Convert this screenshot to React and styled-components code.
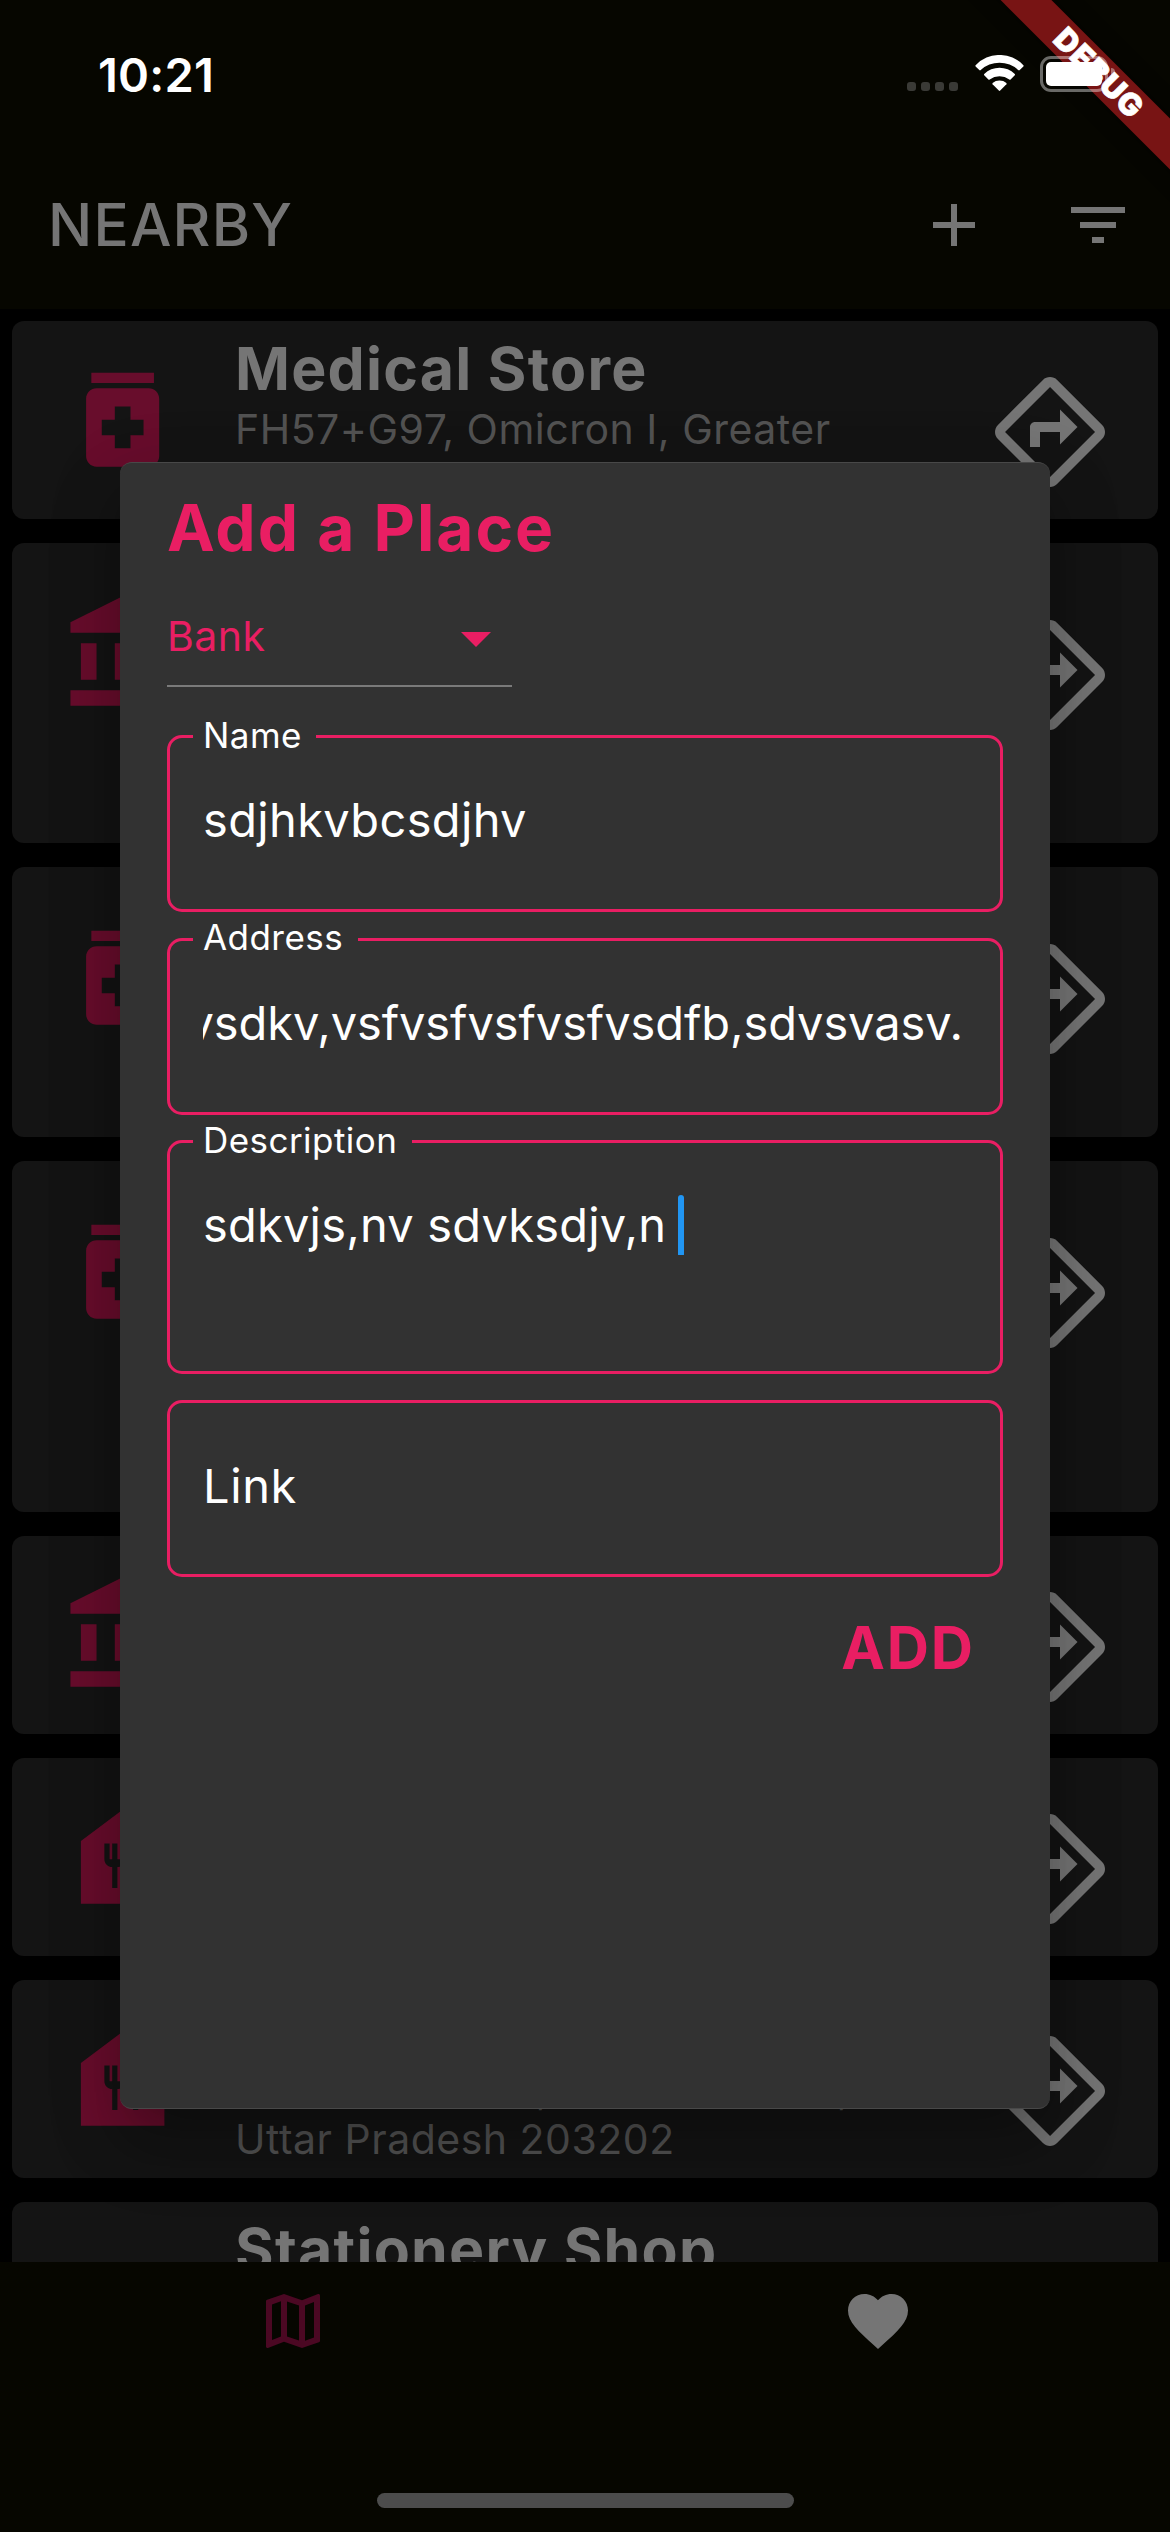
import React from "react";
import styled, { createGlobalStyle } from "styled-components";

const GlobalStyle = createGlobalStyle`
  *, *::before, *::after { box-sizing: border-box; }
  html, body { margin: 0; padding: 0; background: #000; }
`;

const pink = "#e91e63";
const dimPink = "#680d2c";
const dimWhite = "#757575";
const bar = "#060600";

const Screen = styled.main`
  position: relative;
  display: flex;
  flex-direction: column;
  width: 1170px;
  height: 2532px;
  overflow: hidden;
  background: #000;
  color: #fff;
  font-family: Inter, Roboto, "Liberation Sans", sans-serif;
  white-space: nowrap;
`;

const StatusBar = styled.div`
  display: flex;
  flex: none;
  justify-content: space-between;
  height: 141px;
  padding: 46px 55px 0 98px;
  background: ${bar};
`;

const Time = styled.span`
  font-size: 47px;
  font-weight: 600;
  line-height: 57px;
  letter-spacing: 0.2px;
`;

const StatusIcons = styled.div`
  position: relative;
  z-index: 3;
  display: flex;
  align-items: flex-start;
  padding-top: 9px;
`;

const SignalDots = styled.div`
  display: flex;
  gap: 5px;
  margin: 27px 17px 0 0;
`;

const Dot = styled.i`
  width: 9px;
  height: 9px;
  border-radius: 3px;
  background: #3a3a36;
`;

const WifiIcon = styled.svg`
  width: 49px;
  height: 37px;
  margin-right: 16px;
`;

const Battery = styled.div`
  width: 68px;
  height: 36px;
  margin-top: 1px;
  padding: 3px;
  border: 3px solid rgba(255, 255, 255, 0.4);
  border-radius: 11px;
`;

const BatteryFill = styled.div`
  width: 56px;
  height: 24px;
  border-radius: 5px;
  background: #fff;
`;

const BatteryCap = styled.i`
  width: 4px;
  height: 12px;
  margin: 13px 0 0 3px;
  border-radius: 0 4px 4px 0;
  background: rgba(255, 255, 255, 0.4);
`;

const Ribbon = styled.div`
  position: absolute;
  z-index: 2;
  top: 54px;
  left: 948px;
  width: 300px;
  height: 36px;
  padding-left: 3px;
  transform: rotate(45deg);
  background: #781414;
  box-shadow: 0 0 18px rgba(0, 0, 0, 0.5);
  font-size: 31px;
  font-weight: 900;
  line-height: 36px;
  letter-spacing: 0.9px;
  text-align: center;
  -webkit-text-stroke: 0.7px #fff;
`;

const AppBar = styled.header`
  display: flex;
  flex: none;
  align-items: center;
  gap: 72px;
  height: 168px;
  padding: 0 36px 0 48px;
  background: ${bar};
  color: ${dimWhite};
`;

const AppTitle = styled.h1`
  flex: 1;
  margin: 0;
  font-size: 58.5px;
  font-weight: 500;
  line-height: 72px;
  letter-spacing: 1.2px;
`;

const Glyph = styled.svg`
  display: block;
  flex: none;
  width: ${(p) => p.$size}px;
  height: ${(p) => p.$size}px;
  fill: currentColor;
`;

const PlaceList = styled.section`
  display: flex;
  flex: 1;
  flex-direction: column;
  gap: 24px;
  min-height: 0;
  padding: 12px;
  overflow: hidden;
`;

const Card = styled.article`
  display: flex;
  flex: none;
  align-items: flex-start;
  height: ${(p) => p.$height}px;
  border-radius: 12px;
  background: #141414;
`;

const Leading = styled.div`
  width: 223px;
  padding: ${(p) => (p.$tall ? 48.4 : 36.4)}px 0 0 48.4px;
  color: ${dimPink};
`;

const PlaceText = styled.div`
  flex: 1;
  padding-top: 12px;
`;

const PlaceName = styled.h2`
  margin: 0;
  color: ${dimWhite};
  font-size: 59px;
  font-weight: 700;
  line-height: 71px;
  letter-spacing: 1.25px;
`;

const PlaceAddress = styled.p`
  margin: 0;
  color: #525252;
  font-size: 41px;
  line-height: 51px;
  letter-spacing: 0.5px;
  white-space: pre-line;
`;

const Trailing = styled.div`
  padding: ${(p) => (p.$tall ? 72 : 51)}px 48px 0 0;
  color: ${dimWhite};
`;

const BottomNav = styled.nav`
  display: grid;
  flex: none;
  grid-template-columns: 1fr 1fr;
  grid-template-rows: 231px 15px;
  justify-items: center;
  height: 270px;
  background: ${bar};
`;

const NavItem = styled.div`
  padding-top: 23px;
  color: ${(p) => (p.$active ? "#4b0823" : dimWhite)};
`;

const HomeIndicator = styled.div`
  grid-column: 1 / -1;
  width: 417px;
  height: 15px;
  border-radius: 8px;
  background: #4c4c4c;
`;

const Dialog = styled.form`
  position: absolute;
  top: 462px;
  left: 120px;
  display: flex;
  flex-direction: column;
  width: 930px;
  height: 1647px;
  padding: 26px 47px 0;
  border-top: 1px solid #484848;
  border-bottom: 1px solid #484848;
  border-radius: 12px;
  background: #323232;
  box-shadow: 0 33px 45px -21px rgba(0, 0, 0, 0.2),
    0 36px 72px 6px rgba(0, 0, 0, 0.14), 0 20px 70px 10px rgba(0, 0, 0, 0.1);
`;

const DialogTitle = styled.h2`
  margin: 0;
  color: ${pink};
  font-size: 64px;
  font-weight: 700;
  line-height: 78px;
  letter-spacing: 2px;
`;

const Dropdown = styled.div`
  display: flex;
  align-items: center;
  justify-content: space-between;
  width: 345px;
  height: 102px;
  margin-top: 18px;
  padding-top: 2px;
  border-bottom: 2px solid #7a7a7a;
  color: ${pink};
  font-size: 41px;
  line-height: 50px;
  letter-spacing: 0.5px;
  svg { margin-top: 4px; }
`;

const Fields = styled.div`
  display: flex;
  flex-direction: column;
  gap: 25.5px;
  margin-top: 48px;
`;

const Field = styled.div`
  position: relative;
  height: ${(p) => p.$height || 177}px;
  padding: 52px 33px 0;
  border: 3px solid ${pink};
  border-radius: 15px;
`;

const FieldLabel = styled.label`
  position: absolute;
  top: -23.5px;
  left: 23px;
  padding: 0 14.5px 0 10px;
  background: #323232;
  font-size: 35px;
  line-height: 40px;
  letter-spacing: 0.45px;
`;

const FieldValue = styled.div`
  display: flex;
  justify-content: ${(p) => (p.$scrolled ? "flex-end" : "flex-start")};
  padding-right: ${(p) => (p.$scrolled ? 4 : 0)}px;
  overflow: hidden;
  font-size: 47px;
  line-height: 60px;
  letter-spacing: ${(p) => p.$tracking ?? 0.35}px;
  white-space: pre;
`;

const Placeholder = styled.span`
  padding-top: 1px;
`;

const Caret = styled.i`
  width: 6px;
  height: 62px;
  margin: 0 0 -2px -2px;
  border-radius: 3px;
  background: #2196f3;
`;

const AddButton = styled.button`
  align-self: flex-end;
  margin: 36.5px 28px 0 0;
  padding: 0;
  border: 0;
  background: none;
  color: ${pink};
  font: inherit;
  font-size: 58.5px;
  font-weight: 700;
  line-height: 70px;
  letter-spacing: 1.9px;
`;

const paths = {
  add: "M19 13h-6v6h-2v-6H5v-2h6V5h2v6h6v2z",
  filter: "M10 18h4v-2h-4v2zM3 6v2h18V6H3zm3 7h12v-2H6v2z",
  medication:
    "M6 3h12v2H6zM17 6H7c-1.1 0-2 .9-2 2v11c0 1.1.9 2 2 2h10c1.1 0 2-.9 2-2V8c0-1.1-.9-2-2-2zm-1 9h-2.5v2.5h-3V15H8v-3h2.5V9.5h3V12H16v3z",
  bank: "M4 10h3v7H4zM10.5 10h3v7h-3zM2 19h20v3H2zM17 10h3v7h-3zM12 1L2 6v2h20V6z",
  food: "M12 3L4 9v12h16V9l-8-6zm.5 9.5c0 .83-.67 1.5-1.5 1.5v4h-1v-4c-.83 0-1.5-.67-1.5-1.5v-3h1v3h.5v-3h1v3h.5v-3h1v3zM15 18h-1v-3.5h-1v-3c0-1.1.9-2 2-2V18z",
  directions:
    "m22.43 10.59-9.01-9.01c-.75-.75-2.07-.76-2.83 0l-9 9c-.78.78-.78 2.04 0 2.82l9 9c.39.39.9.58 1.41.58.51 0 1.02-.19 1.41-.58l8.99-8.99c.79-.76.8-2.02.03-2.82zm-10.42 10.4-9-9 9-9 9 9-9 9zM8 11v4h2v-3h4v2.5l3.5-3.5L14 7.5V10H9c-.55 0-1 .45-1 1z",
  map: "M20.5 3l-.16.03L15 5.1 9 3 3.36 4.9c-.21.07-.36.25-.36.48V20.5c0 .28.22.5.5.5l.16-.03L9 18.9l6 2.1 5.64-1.9c.21-.07.36-.25.36-.48V3.5c0-.28-.22-.5-.5-.5zM10 5.47l4 1.4v11.66l-4-1.4V5.47zm-5 .99l3-1.01v11.7l-3 1.16V6.46zm14 11.08l-3 1.01V6.86l3-1.16v11.84z",
  heart:
    "M12 21.35l-1.45-1.32C5.4 15.36 2 12.28 2 8.5 2 5.42 4.42 3 7.5 3c1.74 0 3.41.81 4.5 2.09C13.09 3.81 14.76 3 16.5 3 19.58 3 22 5.42 22 8.5c0 3.78-3.4 6.86-8.55 11.54L12 21.35z",
  dropDown: "M7 10l5 5 5-5z",
};

const Icon = ({ name, size = 72 }) => (
  <Glyph viewBox="0 0 24 24" $size={size} aria-hidden="true">
    <path d={paths[name]} />
  </Glyph>
);

const places = [
  { icon: "medication", height: 198, name: "Medical Store", address: "FH57+G97, Omicron I, Greater" },
  { icon: "bank", height: 300, tall: true },
  { icon: "medication", height: 270, tall: true },
  { icon: "medication", height: 351, tall: true },
  { icon: "bank", height: 198 },
  { icon: "food", height: 198 },
  { icon: "food", height: 198, name: "Food Court", address: "Omicron Phase, Greater Noida,\nUttar Pradesh 203202" },
  { height: 300, tall: true, name: "Stationery Shop" },
];

const Place = ({ icon, height, tall, name, address }) => (
  <Card $height={height}>
    <Leading $tall={tall}>{icon && <Icon name={icon} size={125.3} />}</Leading>
    <PlaceText>
      {name && <PlaceName>{name}</PlaceName>}
      {address && <PlaceAddress>{address}</PlaceAddress>}
    </PlaceText>
    <Trailing $tall={tall}>
      <Icon name="directions" size={120} />
    </Trailing>
  </Card>
);

const OutlinedField = ({ label, height, scrolled, tracking, children }) => (
  <Field $height={height}>
    {label && <FieldLabel>{label}</FieldLabel>}
    <FieldValue $scrolled={scrolled} $tracking={tracking}>
      {children}
    </FieldValue>
  </Field>
);

export default function App() {
  return (
    <Screen>
      <GlobalStyle />
      <StatusBar>
        <Time>10:21</Time>
        <StatusIcons>
          <SignalDots>
            <Dot />
            <Dot />
            <Dot />
            <Dot />
          </SignalDots>
          <WifiIcon viewBox="0 0 49 37" fill="#fff">
            <path d="M.6 10.2A33 33 0 0 1 48.4 10.2Q48.9 10.8 48.4 11.4L44.7 15.1Q44 15.7 43.3 15.1A27.6 27.6 0 0 0 5.7 15.1Q5 15.7 4.3 15.1L.6 11.4Q.1 10.8.6 10.2Z" />
            <path d="M9.2 19A21.7 21.7 0 0 1 39.8 19Q40.3 19.7 39.8 20.3L35.6 24.4Q35 24.9 34.3 24.4A16.7 16.7 0 0 0 14.7 24.4Q14 24.9 13.4 24.4L9.2 20.3Q8.7 19.7 9.2 19Z" />
            <path d="M17.6 28A11 11 0 0 1 31.4 28Q31.9 28.6 31.4 29.2L25.2 35.6Q24.5 36.3 23.8 35.6L17.6 29.2Q17.1 28.6 17.6 28Z" />
          </WifiIcon>
          <Battery>
            <BatteryFill />
          </Battery>
          <BatteryCap />
        </StatusIcons>
      </StatusBar>
      <Ribbon>DEBUG</Ribbon>

      <AppBar>
        <AppTitle>NEARBY</AppTitle>
        <Icon name="add" />
        <Icon name="filter" />
      </AppBar>

      <PlaceList>
        {places.map((place, i) => (
          <Place key={i} {...place} />
        ))}
      </PlaceList>

      <BottomNav>
        <NavItem $active>
          <Icon name="map" />
        </NavItem>
        <NavItem>
          <Icon name="heart" />
        </NavItem>
        <HomeIndicator />
      </BottomNav>

      <Dialog>
        <DialogTitle>Add a Place</DialogTitle>
        <Dropdown>
          <span>Bank</span>
          <Icon name="dropDown" />
        </Dropdown>
        <Fields>
          <OutlinedField label="Name">sdjhkvbcsdjhv</OutlinedField>
          <OutlinedField label="Address" scrolled tracking={-0.08}>
            vsdkv,vsfvsfvsfvsfvsdfb,sdvsvasv.
          </OutlinedField>
          <OutlinedField label="Description" height={234} tracking={0.2}>
            {"sdkvjs,nv sdvksdjv,n "}
            <Caret />
          </OutlinedField>
          <OutlinedField tracking={0.6}>
            <Placeholder>Link</Placeholder>
          </OutlinedField>
        </Fields>
        <AddButton type="button">ADD</AddButton>
      </Dialog>
    </Screen>
  );
}
